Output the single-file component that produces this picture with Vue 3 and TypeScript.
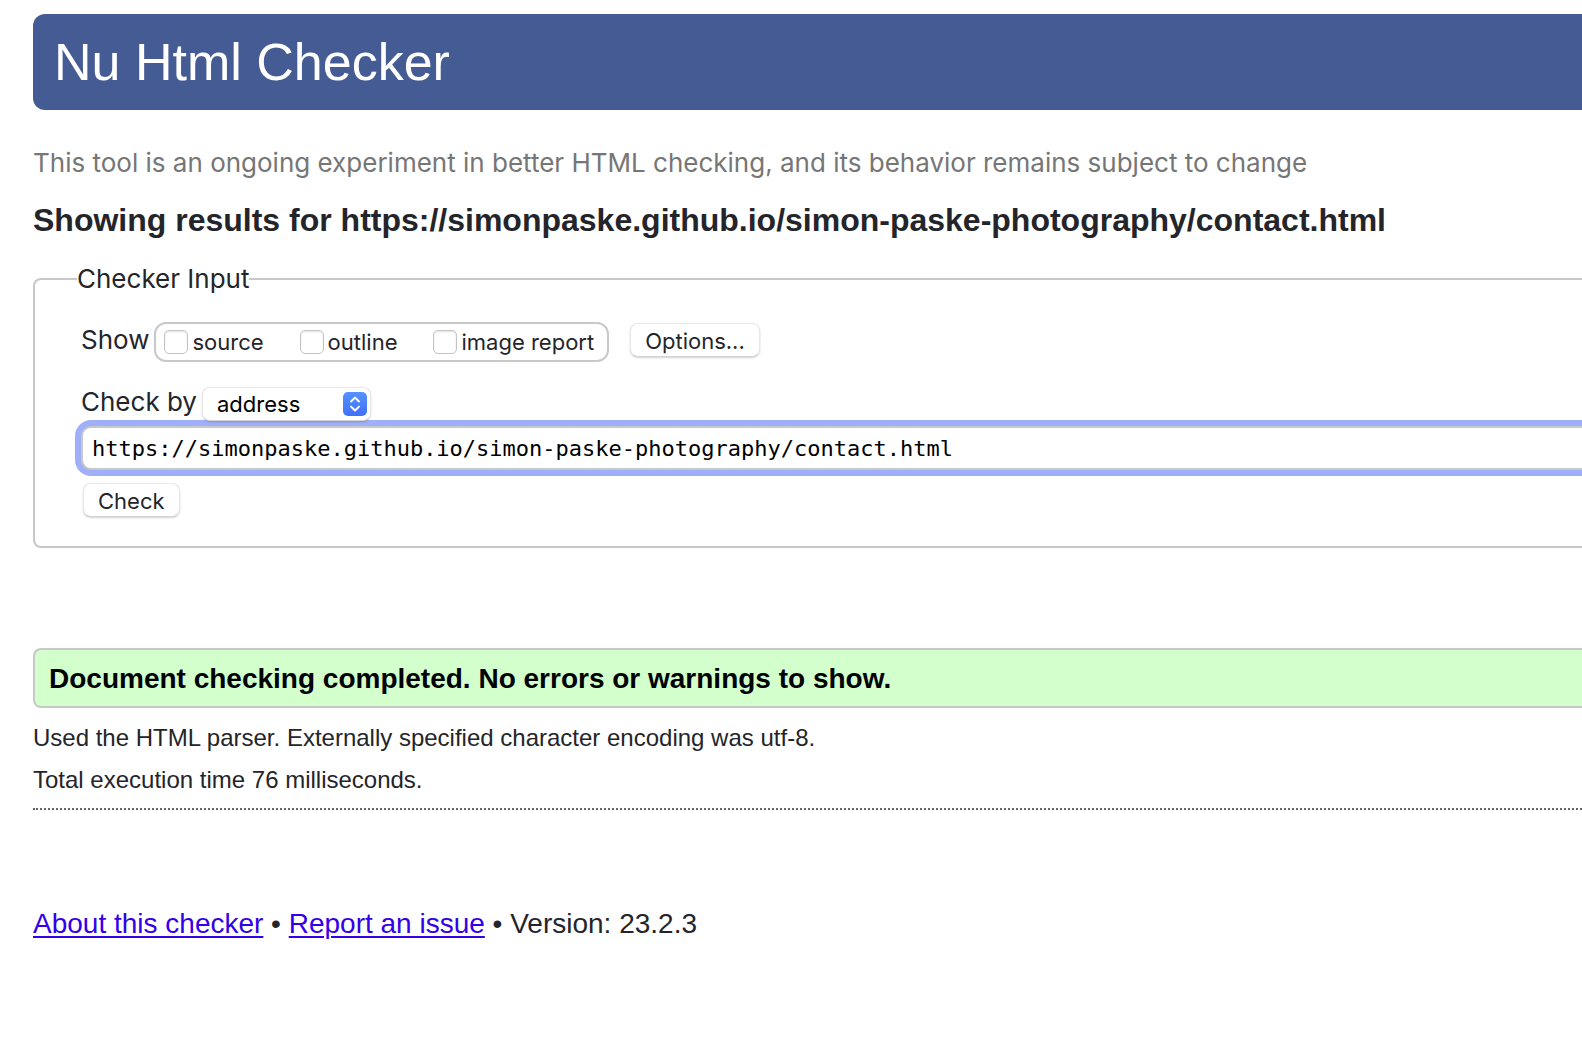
<script setup lang="ts">
import { ref } from 'vue'

interface ShowOption {
  id: string
  label: string
}

const showOptions: ShowOption[] = [
  { id: 'source', label: 'source' },
  { id: 'outline', label: 'outline' },
  { id: 'image-report', label: 'image report' },
]

const shown = ref<string[]>([])
const method = ref<string>('address')
const address = ref<string>('https://simonpaske.github.io/simon-paske-photography/contact.html')
const checked = ref<string>(address.value)

function check(): void {
  checked.value = address.value
}
</script>

<template>
  <div class="page">
    <header class="banner">
      <h1>Nu Html Checker</h1>
    </header>
    <main>
      <p class="note">This tool is an ongoing experiment in better HTML checking, and its behavior remains subject to change</p>
      <h2>Showing results for {{ checked }}</h2>

      <form @submit.prevent="check">
        <fieldset class="inputs">
          <legend>Checker Input</legend>
          <div class="body">
            <div class="row show-row">
              <span id="show-label" class="row-label">Show</span>
              <div class="checkboxes" role="group" aria-labelledby="show-label">
                <label v-for="option in showOptions" :key="option.id" :for="option.id">
                  <input :id="option.id" v-model="shown" type="checkbox" :value="option.id" />
                  <span>{{ option.label }}</span>
                </label>
              </div>
              <button type="button" class="options">Options...</button>
            </div>
            <div class="row method-row">
              <label for="method" class="row-label">Check by</label>
              <span class="select">
                <select id="method" v-model="method">
                  <option value="address">address</option>
                  <option value="file">file upload</option>
                  <option value="text">text input</option>
                </select>
                <svg viewBox="0 0 24 24" aria-hidden="true">
                  <defs>
                    <linearGradient id="stepper" x1="0" y1="0" x2="0" y2="1">
                      <stop offset="0" stop-color="#5592ff" />
                      <stop offset="1" stop-color="#3f70fb" />
                    </linearGradient>
                  </defs>
                  <rect width="24" height="24" rx="5" fill="url(#stepper)" />
                  <path d="M8 9.4 12 5.6 16 9.4M8 14.6 12 18.4 16 14.6" fill="none" stroke="#fff" stroke-width="2" stroke-linecap="round" stroke-linejoin="round" />
                </svg>
              </span>
            </div>
            <input v-model="address" class="address" type="text" aria-label="Address" spellcheck="false" />
            <button type="submit" class="check">Check</button>
          </div>
        </fieldset>
      </form>

      <p class="success">Document checking completed. No errors or warnings to show.</p>
      <div class="details">
        <p>Used the HTML parser. Externally specified character encoding was utf-8.</p>
        <p>Total execution time 76 milliseconds.</p>
      </div>
    </main>
    <footer>
      <a href="#about">About this checker</a> • <a href="#issue">Report an issue</a> • Version: 23.2.3
    </footer>
  </div>
</template>

<style>
body {
  background: #fff;
}
</style>

<style scoped>
.page {
  padding: 14px 0 40px 33px;
  overflow: hidden;
  color: #24252a;
  font-family: 'Liberation Sans', Arial, sans-serif;
}

h1,
h2,
p {
  margin: 0;
}

.banner {
  padding: 18px 21px;
  border-radius: 12px 0 0 12px;
  background: #455b93;
  color: #fff;
}

h1 {
  font-size: 52px;
  line-height: 60px;
  font-weight: 400;
}

.note {
  margin-top: 37px;
  color: #767676;
  font-family: Inter, sans-serif;
  font-size: 26px;
  line-height: 32px;
}

h2 {
  margin-top: 21px;
  font-size: 32px;
  line-height: 40px;
  font-weight: 700;
}

.inputs {
  min-width: 0;
  margin: 22px 0 0;
  padding: 26px 0 29px 42px;
  border: 2px solid #c8c8c8;
  border-right: 0;
  border-radius: 8px 0 0 8px;
  font-family: Inter, sans-serif;
  font-size: 26px;
}

legend {
  padding: 0;
  line-height: 34px;
}

.body {
  padding-left: 4px;
}

.row {
  display: flex;
  align-items: center;
  gap: 5px;
}

.row-label {
  padding-bottom: 4px;
  line-height: 30px;
}

.checkboxes {
  display: flex;
  gap: 36px;
  height: 40px;
  box-sizing: border-box;
  padding: 0 13px 0 8px;
  border: 2px solid #c8c8c8;
  border-radius: 12px;
  font-size: 22px;
}

.checkboxes label {
  display: flex;
  align-items: center;
  gap: 4px;
}

.checkboxes input {
  appearance: none;
  width: 24px;
  height: 24px;
  margin: 0;
  border: 1px solid #c4c4c4;
  border-radius: 5px;
  background: #fff;
  box-shadow: inset 0 1px 2px #0000001f;
}

.checkboxes input:checked {
  background: #3f70fb;
}

button,
select {
  height: 34px;
  margin: 0;
  border: 1px solid #e8e8e8;
  border-bottom-color: #d4d4d4;
  border-radius: 8px;
  background: #fff;
  box-shadow: 0 1px 2px #0000002e;
  color: #24252a;
  font-family: Inter, sans-serif;
  font-size: 22px;
  line-height: 28px;
}

button {
  padding: 2px 14px 0;
}

.options {
  margin: 0 0 4px 16px;
}

.method-row {
  margin-top: 25px;
}

.select {
  position: relative;
  z-index: 1;
  display: grid;
  align-items: center;
  width: 169px;
}

.select select,
.select svg {
  grid-area: 1 / 1;
}

.select select {
  appearance: none;
  width: 100%;
  padding: 0 34px 0 14px;
  color: #000;
}

.select svg {
  justify-self: end;
  width: 24px;
  height: 24px;
  margin-right: 4px;
  pointer-events: none;
}

.address {
  display: block;
  box-sizing: border-box;
  width: 100%;
  height: 44px;
  margin: 5px 0 0;
  padding: 0 9px;
  border: 2px solid #c8c8c8;
  border-right: 0;
  border-radius: 10px 0 0 10px;
  outline: none;
  box-shadow: 0 0 0 6px #a0affa;
  color: #000;
  font-family: 'DejaVu Sans Mono', monospace;
  font-size: 22px;
}

.check {
  display: block;
  margin: 13px 0 0 2px;
}

.success {
  margin-top: 100px;
  padding: 9px 14px 7px;
  border: 2px solid #c8c8c8;
  border-right: 0;
  border-radius: 8px 0 0 8px;
  background: #d2ffcb;
  color: #000;
  font-size: 28px;
  line-height: 40px;
  font-weight: 700;
}

.details {
  margin-top: 9px;
  padding-bottom: 7px;
  border-bottom: 2px dotted #666;
  font-size: 24px;
  line-height: 42px;
}

footer {
  margin-top: 94px;
  font-size: 28px;
  line-height: 40px;
}

a {
  color: #3300e8;
  text-decoration-thickness: 2px;
  text-underline-offset: 3px;
}
</style>
